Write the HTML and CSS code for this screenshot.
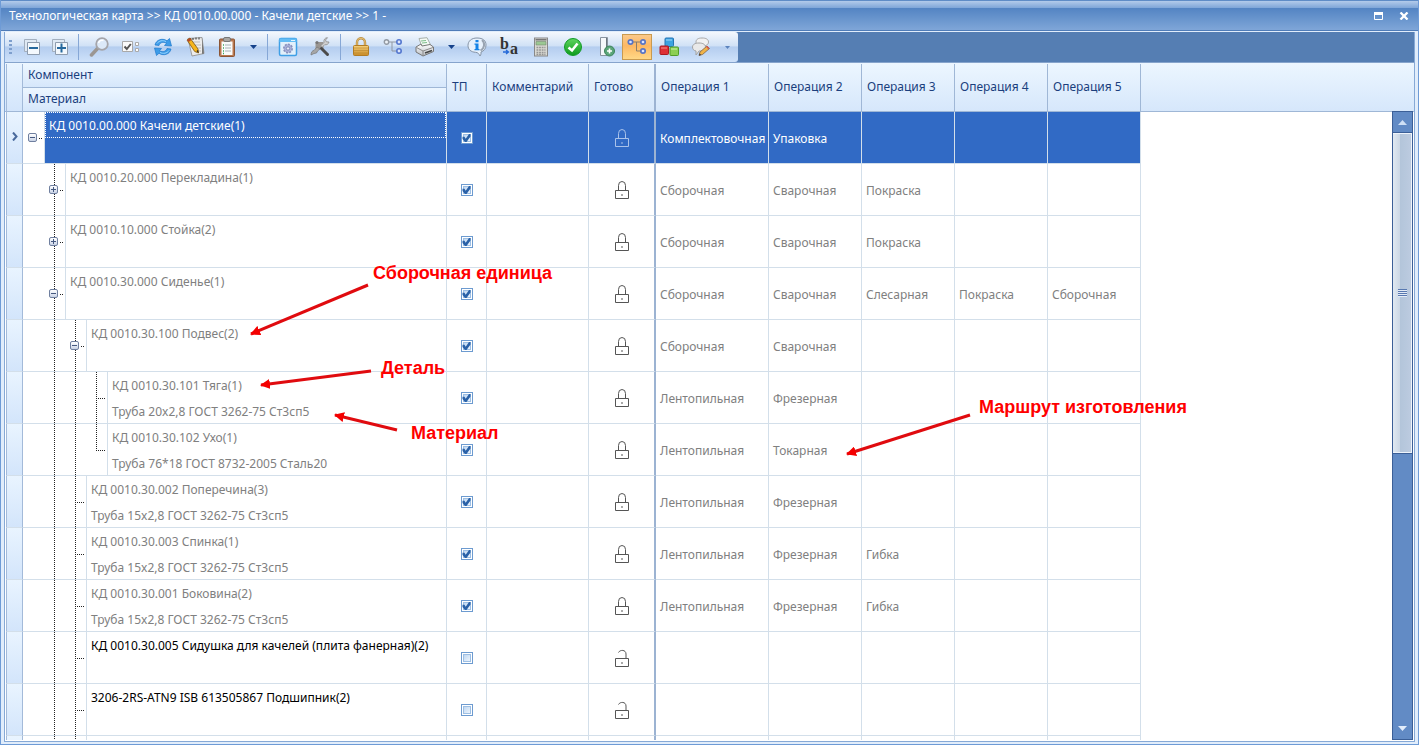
FILE: index.html
```html
<!DOCTYPE html>
<html lang="ru">
<head>
<meta charset="utf-8">
<title>Технологическая карта</title>
<link rel="stylesheet" href="styles.css">
</head>
<body>
<svg class="defs" aria-hidden="true">
  <defs>
    <linearGradient id="gold" x2="0" y2="1"><stop offset="0" stop-color="#f6d27c"/><stop offset="1" stop-color="#c98a26"/></linearGradient>
    <linearGradient id="green" x2="0" y2="1"><stop offset="0" stop-color="#5fd45f"/><stop offset="1" stop-color="#0c9a1c"/></linearGradient>
    <linearGradient id="steel" x2="0" y2="1"><stop offset="0" stop-color="#ffffff"/><stop offset="1" stop-color="#b9bec4"/></linearGradient>
    <symbol id="lock" viewBox="0 0 14 19"><path d="M3.500 9V4.500a3.500 4 0 0 1 7 0V9" fill="none" stroke="currentColor" stroke-width="1"/><path d="M.5 9.500h13v8H.5z" fill="none" stroke="currentColor"/><path d="M6 13h2v2H6z" fill="currentColor" opacity=".5"/></symbol>
    <symbol id="unlock" viewBox="0 0 14 19"><path d="M3.500 3.500C5 .5 11 .5 11 5v4" fill="none" stroke="currentColor"/><path d="M.5 9.500h13v8H.5z" fill="none" stroke="currentColor"/><path d="M6 13h2v2H6z" fill="currentColor" opacity=".5"/></symbol>
  </defs>
</svg>
<main class="window">
  <header class="titlebar">
    <h1>Технологическая карта &gt;&gt; КД 0010.00.000 - Качели детские &gt;&gt; 1 -</h1>
    <button class="winbtn" aria-label="Развернуть"><svg width="9" height="8"><path d="M.5 1h8v6.500h-8z" fill="none" stroke="#fff"/><path d="M0 0h9v3H0z" fill="#fff"/></svg></button>
    <button class="winbtn" aria-label="Закрыть"><svg width="10" height="8"><path d="M1.500 .5l7 7M8.500 .5l-7 7" stroke="#fff" stroke-width="2.300"/></svg></button>
  </header>
  <section class="client">
    <div class="dock">
      <div class="toolbar" role="toolbar">
        <span class="grip"></span>
        <button class="tool small" aria-label="Свернуть"><svg width="18" height="18"><path d="M1.500 1.500h12v12h-12z" fill="#dfe9f4" stroke="#a3afbe"/><path d="M4.500 4.500h12v12h-12z" fill="#f3f8fd" stroke="#8e9cae"/><path d="M6 10h9" stroke="#26689d" stroke-width="2"/></svg></button>
        <button class="tool small" aria-label="Развернуть"><svg width="18" height="18"><path d="M1.500 1.500h12v12h-12z" fill="#dfe9f4" stroke="#a3afbe"/><path d="M4.500 4.500h12v12h-12z" fill="#f3f8fd" stroke="#8e9cae"/><path d="M6 10h9M10.500 5.500v9" stroke="#26689d" stroke-width="2"/></svg></button>
        <span class="sep"></span>
        <button class="tool" aria-label="Поиск"><svg width="20" height="20"><path d="M9 11l-6.500 7" stroke="#9b9692" stroke-width="3.500" stroke-linecap="round"/><circle cx="13" cy="7" r="5.800" fill="#dce9f8" stroke="#a5a5aa" stroke-width="1.800"/><path d="M9.500 6a4 4 0 0 1 5-2.500" fill="none" stroke="#fff" stroke-width="1.500"/></svg></button>
        <button class="tool" aria-label="Отметить"><svg width="20" height="20"><path d="M1.500 4.500h10v10h-10z" fill="#fafafa" stroke="#a9a9a9"/><path d="M3.500 9.500l2.300 2.500 4-5" fill="none" stroke="#555" stroke-width="2"/><path d="M14.500 5.500h3v3h-3zM14.500 11.500h3v3h-3z" fill="#fff" stroke="#aaa"/></svg></button>
        <button class="tool" aria-label="Обновить"><svg width="20" height="20"><g fill="#3c9be8" stroke="#1c78cd" stroke-width=".7"><path d="M2 8C3 3 9 .5 14 3.800L16.500 1.500 18.500 9l-7-.5 2-2.300C10 4.500 7 5.500 6 8.500z"/><path d="M18 12c-1 5-7 7.500-12 4.200L3.500 18.500 1.500 11l7 .5-2 2.300c3.500 1.700 6.500.7 7.500-2.300z"/></g><path d="M4 6.500C6 3.500 10 3 13 4.500M16 13.500c-2 3-6 3.500-9 2" fill="none" stroke="#9ad6ff"/></svg></button>
        <button class="tool" aria-label="Изменить"><svg width="20" height="20"><path d="M3 1.500l14-1 2 16-12 2.500z" fill="#ececec" stroke="#9c9c9c"/><path d="M17 .5l2 16-2 .5z" fill="#777"/><path d="M8 5h7M8 8h8M9 11h7M10 14h6" stroke="#bbb"/><path d="M5 1v2M8 1v2M11 .5v2M14 .5v2" stroke="#333"/><path d="M2 3l3-2 8 11 .5 4-3.800-1.500z" fill="#f6b51b" stroke="#7a5515" stroke-width=".8"/><path d="M2 3l3-2 1.500 2-3 2z" fill="#b44a2a"/><path d="M11.500 14l2 2-.5-3z" fill="#222"/></svg></button>
        <button class="tool" aria-label="Буфер"><svg width="18" height="20"><rect x="1.500" y="2" width="15" height="17.500" rx="1" fill="#b97850" stroke="#8b5535"/><path d="M3.500 4.500h11V18h-11z" fill="#f8fbfb"/><rect x="5.500" y=".5" width="7" height="4" rx="1.500" fill="#a9a6a2" stroke="#777"/><path d="M7 8h6M7 11h6M7 14h6" stroke="#a8b2b8"/><path d="M5 8h1M5 11h1M5 14h1M5 16.500h1" stroke="#3ca75b" stroke-width="1.500"/></svg></button>
        <button class="tool drop" aria-label="Ещё"><svg width="7" height="4"><path d="M0 0h7L3.500 4z" fill="#15428b"/></svg></button>
        <span class="sep"></span>
        <button class="tool" aria-label="Настройка окна"><svg width="20" height="20"><rect x="1.500" y="1.500" width="17" height="17" rx="1.500" fill="#e2f0fb" stroke="#3f9fe6" stroke-width="1.500"/><path d="M1.500 1.500h17V5h-17z" fill="#63bdf5"/><path d="M13 3.500h4" stroke="#e4f5ff"/><circle cx="10" cy="11.500" r="4.200" fill="#a9b1da" stroke="#8790bd" stroke-width="1.600" stroke-dasharray="2 1.200"/><circle cx="10" cy="11.500" r="1.700" fill="#e6eaf7" stroke="#7e89b9"/></svg></button>
        <button class="tool" aria-label="Инструменты"><svg width="20" height="20"><path d="M5.500 5h8v7h-8z" fill="#9a9692"/><path d="M11 8.500l3-3c-.7-2.500 1-5 3.500-4.800L15.500 3l.8 1.800 2.700.2c-.5 2.300-2.500 3.200-4.300 2.700l-3 3z" fill="#d0d0d0" stroke="#8d8d8d" stroke-width=".8"/><path d="M7 10l-3 3.500c-1.500 0-3 1.500-3 4.500l3-1.500 2.500-.5 1-2 2.500-2z" fill="#a7a7a7" stroke="#777" stroke-width=".7"/><circle cx="7" cy="5.500" r="1.500" fill="#777"/><path d="M11.500 11.500l6 6" stroke="#4b4b4b" stroke-width="3" stroke-linecap="round"/></svg></button>
        <span class="sep"></span>
        <button class="tool" aria-label="Блокировать"><svg width="18" height="20"><path d="M5 9V5.500a4 4.200 0 0 1 8 0V9" fill="none" stroke="#b98a39" stroke-width="2.400"/><path d="M5 9V5.500a4 4.200 0 0 1 8 0V9" fill="none" stroke="#f0d28b" stroke-width=".8"/><rect x="1.500" y="8.500" width="15" height="10" rx="1" fill="url(#gold)" stroke="#b27c24"/><path d="M2 11h14M2 13.500h14M2 16h14" stroke="#b9872f" opacity=".6"/></svg></button>
        <button class="tool" aria-label="Структура"><svg width="20" height="20"><path d="M5 5h9M9 5v9h5" fill="none" stroke="#8f97a3"/><circle cx="3.500" cy="5" r="2.200" fill="#eef3f8" stroke="#939aa3" stroke-width="1.400"/><circle cx="16" cy="5" r="2.200" fill="#dce5fa" stroke="#5477cf" stroke-width="1.600"/><circle cx="16" cy="14" r="2.200" fill="#dce5fa" stroke="#5477cf" stroke-width="1.600"/></svg></button>
        <button class="tool" aria-label="Печать"><svg width="20" height="20"><path d="M4 1.500l8-.8 4 8-9 1.300z" fill="#f4faf4" stroke="#a8b0ab"/><path d="M6 4l5-.5M7 6l5-.5" stroke="#7fbf8c"/><path d="M1 10l5-3 1 2 8-1.500 3.500 2.500v4.500L8 19l-7-4z" fill="url(#steel)" stroke="#777"/><path d="M1.500 10.500L8 14l10-3.500M8 14v4.500" fill="none" stroke="#8a8a8a"/><path d="M10 16l7-2.500" stroke="#444" stroke-width="1.500"/></svg></button>
        <button class="tool drop" aria-label="Параметры печати"><svg width="7" height="4"><path d="M0 0h7L3.500 4z" fill="#15428b"/></svg></button>
        <button class="tool" aria-label="Сведения"><svg width="20" height="20"><path d="M10 1c6 0 9 2.800 9 7 0 3.500-2 6-5 7 .2 1.500 0 2.800-1 4-1-2-1.800-3.500-4.500-3.700C4 15 1 12.500 1 8.500 1 4 4.500 1 10 1z" fill="#e7f1fc" stroke="#8593a5"/><path d="M15 3c3 2.500 3 8-1.500 10.500" fill="none" stroke="#99a4b2" stroke-width="2"/><path d="M8.500 3h3v2.200h-3zM7.500 6.500h4V12h1v1.200H7.500V12h1V7.700h-1z" fill="#1583e6"/></svg></button>
        <button class="tool" aria-label="Переименовать"><svg width="26" height="24"><text class="ba" x="4" y="14">b</text><text class="ba" x="14" y="19">a</text><path d="M7 17h5M10 15l2.500 2-2.500 2" fill="none" stroke="#2368d8" stroke-width="1.300"/></svg></button>
        <button class="tool" aria-label="Калькулятор"><svg width="18" height="20"><rect x="2.500" y="1" width="13" height="18" fill="#d9d9d2" stroke="#888"/><path d="M3.500 2h11v1.500h-11z" fill="#777"/><path d="M4 4.500h10V8H4z" fill="#9bc893" stroke="#768a71" stroke-width=".6"/><path d="M4.500 10.500h9M4.500 13h9M4.500 15.500h9M4.500 17.500h9" stroke="#959595" stroke-width="1.400" stroke-dasharray="1.800 .8"/></svg></button>
        <button class="tool" aria-label="Готово"><svg width="20" height="20"><circle cx="10" cy="10" r="8.500" fill="url(#green)" stroke="#119b27"/><path d="M5.500 10.500L9 13.500l5.500-7" fill="none" stroke="#fff" stroke-width="2.600"/></svg></button>
        <button class="tool" aria-label="Добавить документ"><svg width="20" height="20"><path d="M5.500 .5h7v18h-7z" fill="#f5f8fb" stroke="#8994a0"/><path d="M11.500 1v12" stroke="#6c7680"/><circle cx="14.500" cy="14" r="5" fill="#5aa578" stroke="#3b8359"/><path d="M12 14h5M14.500 11.500v5" stroke="#fff" stroke-width="1.600"/></svg></button>
        <button class="tool active" aria-pressed="true" aria-label="Дерево"><svg width="20" height="20"><path d="M5 5h9M9.500 5v9H14" fill="none" stroke="#8b7d6c"/><g fill="#dbe5ff" stroke="#5874c4" stroke-width="1.700"><circle cx="3.500" cy="5" r="2.200"/><circle cx="16" cy="5" r="2.200"/><circle cx="16" cy="14" r="2.200"/></g></svg></button>
        <button class="tool" aria-label="Блоки"><svg width="20" height="20"><rect x="6" y="1" width="8.500" height="8.500" rx="1" fill="#3ca3e0" stroke="#2475b5"/><path d="M7 3h6" stroke="#a1d9fa"/><rect x="1" y="9" width="8.500" height="8.500" rx="1" fill="#de3036" stroke="#aa1a20"/><path d="M2 11h6" stroke="#f78d8d"/><rect x="11" y="10" width="8.500" height="8.500" rx="1" fill="#8ccf54" stroke="#519d29"/><path d="M12 12h6" stroke="#cdf2a3"/></svg></button>
        <button class="tool" aria-label="Комментарии"><svg width="20" height="20"><path d="M11 1c4 0 6.500 1.300 6.500 4S15 9 11 9 5 7.500 5 5s2-4 6-4z" fill="#f1f1f1" stroke="#a8a8a8"/><path d="M8 6c4 0 6.500 1.500 6.500 4S12 14 8 14l-3 4v-4c-2.500-.5-3.500-2-3.500-4C1.500 7.500 4 6 8 6z" fill="#e9e9e9" stroke="#a3a3a3"/><path d="M8 18.500l1-3.500 7-6 2.500 2.500-7 6z" fill="#f0b347" stroke="#80654a" stroke-width=".8"/><path d="M8 18.500l.6-2 1.500 1.500z" fill="#333"/><path d="M15 9.800l2.300 2.500 1.200-1-2.500-2.500z" fill="#d5574f"/></svg></button>
        <button class="tool overflow" aria-label="Другие кнопки"><svg width="5" height="3"><path d="M0 0h5L2.500 3z" fill="#5b83bd"/></svg></button>
      </div>
    </div>
    <div class="grid">
      <div class="viewport">
        <table>
          <colgroup><col class="c-ind"><col class="c-tree"><col class="c-tp"><col class="c-comment"><col class="c-ready"><col class="c-op1"><col class="c-op"><col class="c-op"><col class="c-op"><col class="c-op"></colgroup>
          <thead>
            <tr><th rowspan="2" class="ind"></th><th class="half">Компонент</th><th rowspan="2">ТП</th><th rowspan="2">Комментарий</th><th rowspan="2" class="fix">Готово</th><th rowspan="2">Операция 1</th><th rowspan="2">Операция 2</th><th rowspan="2">Операция 3</th><th rowspan="2">Операция 4</th><th rowspan="2">Операция 5</th></tr>
            <tr><th class="half">Материал</th></tr>
          </thead>
          <tbody>
            <tr class="selected"><td class="ind"><svg width="6" height="9"><path d="M1 .5l3.500 4L1 8.500" fill="none" stroke="#49699c" stroke-width="2"/></svg></td><td class="treecell"><div class="tree"><span class="slot"><button class="exp" aria-label="Свернуть"></button><i></i></span><div class="name"><p>КД 0010.00.000 Качели детские(1)</p></div></div></td><td class="mid"><input type="checkbox" checked aria-label="ТП"></td><td></td><td class="mid fix"><svg class="lk"><use href="#lock"/></svg></td><td>Комплектовочная</td><td>Упаковка</td><td></td><td></td><td></td></tr>
            <tr><td class="ind"></td><td class="treecell"><div class="tree"><span class="slot"></span><span class="slot line"><button class="exp plus" aria-label="Развернуть"></button><i></i></span><div class="name"><p>КД 0010.20.000 Перекладина(1)</p></div></div></td><td class="mid"><input type="checkbox" checked aria-label="ТП"></td><td></td><td class="mid fix"><svg class="lk"><use href="#lock"/></svg></td><td>Сборочная</td><td>Сварочная</td><td>Покраска</td><td></td><td></td></tr>
            <tr><td class="ind"></td><td class="treecell"><div class="tree"><span class="slot"></span><span class="slot line"><button class="exp plus" aria-label="Развернуть"></button><i></i></span><div class="name"><p>КД 0010.10.000 Стойка(2)</p></div></div></td><td class="mid"><input type="checkbox" checked aria-label="ТП"></td><td></td><td class="mid fix"><svg class="lk"><use href="#lock"/></svg></td><td>Сборочная</td><td>Сварочная</td><td>Покраска</td><td></td><td></td></tr>
            <tr><td class="ind"></td><td class="treecell"><div class="tree"><span class="slot"></span><span class="slot line"><button class="exp" aria-label="Свернуть"></button><i></i></span><div class="name"><p>КД 0010.30.000 Сиденье(1)</p></div></div></td><td class="mid"><input type="checkbox" checked aria-label="ТП"></td><td></td><td class="mid fix"><svg class="lk"><use href="#lock"/></svg></td><td>Сборочная</td><td>Сварочная</td><td>Слесарная</td><td>Покраска</td><td>Сборочная</td></tr>
            <tr><td class="ind"></td><td class="treecell"><div class="tree"><span class="slot"></span><span class="slot line"></span><span class="slot line"><button class="exp" aria-label="Свернуть"></button><i></i></span><div class="name"><p>КД 0010.30.100 Подвес(2)</p></div></div></td><td class="mid"><input type="checkbox" checked aria-label="ТП"></td><td></td><td class="mid fix"><svg class="lk"><use href="#lock"/></svg></td><td>Сборочная</td><td>Сварочная</td><td></td><td></td><td></td></tr>
            <tr><td class="ind"></td><td class="treecell"><div class="tree"><span class="slot"></span><span class="slot line"></span><span class="slot line"></span><span class="slot line leaf"><i></i></span><div class="name"><p>КД 0010.30.101 Тяга(1)</p><p>Труба 20x2,8 ГОСТ 3262-75 Ст3сп5</p></div></div></td><td class="mid"><input type="checkbox" checked aria-label="ТП"></td><td></td><td class="mid fix"><svg class="lk"><use href="#lock"/></svg></td><td>Лентопильная</td><td>Фрезерная</td><td></td><td></td><td></td></tr>
            <tr><td class="ind"></td><td class="treecell"><div class="tree"><span class="slot"></span><span class="slot line"></span><span class="slot line"></span><span class="slot line leaf last"><i></i></span><div class="name"><p>КД 0010.30.102 Ухо(1)</p><p>Труба 76*18 ГОСТ 8732-2005 Сталь20</p></div></div></td><td class="mid"><input type="checkbox" checked aria-label="ТП"></td><td></td><td class="mid fix"><svg class="lk"><use href="#lock"/></svg></td><td>Лентопильная</td><td>Токарная</td><td></td><td></td><td></td></tr>
            <tr><td class="ind"></td><td class="treecell"><div class="tree"><span class="slot"></span><span class="slot line"></span><span class="slot line leaf"><i></i></span><div class="name"><p>КД 0010.30.002 Поперечина(3)</p><p>Труба 15x2,8 ГОСТ 3262-75 Ст3сп5</p></div></div></td><td class="mid"><input type="checkbox" checked aria-label="ТП"></td><td></td><td class="mid fix"><svg class="lk"><use href="#lock"/></svg></td><td>Лентопильная</td><td>Фрезерная</td><td></td><td></td><td></td></tr>
            <tr><td class="ind"></td><td class="treecell"><div class="tree"><span class="slot"></span><span class="slot line"></span><span class="slot line leaf"><i></i></span><div class="name"><p>КД 0010.30.003 Спинка(1)</p><p>Труба 15x2,8 ГОСТ 3262-75 Ст3сп5</p></div></div></td><td class="mid"><input type="checkbox" checked aria-label="ТП"></td><td></td><td class="mid fix"><svg class="lk"><use href="#lock"/></svg></td><td>Лентопильная</td><td>Фрезерная</td><td>Гибка</td><td></td><td></td></tr>
            <tr><td class="ind"></td><td class="treecell"><div class="tree"><span class="slot"></span><span class="slot line"></span><span class="slot line leaf"><i></i></span><div class="name"><p>КД 0010.30.001 Боковина(2)</p><p>Труба 15x2,8 ГОСТ 3262-75 Ст3сп5</p></div></div></td><td class="mid"><input type="checkbox" checked aria-label="ТП"></td><td></td><td class="mid fix"><svg class="lk"><use href="#lock"/></svg></td><td>Лентопильная</td><td>Фрезерная</td><td>Гибка</td><td></td><td></td></tr>
            <tr class="new"><td class="ind"></td><td class="treecell"><div class="tree"><span class="slot"></span><span class="slot line"></span><span class="slot line leaf"><i></i></span><div class="name"><p>КД 0010.30.005 Сидушка для качелей (плита фанерная)(2)</p></div></div></td><td class="mid"><input type="checkbox" aria-label="ТП"></td><td></td><td class="mid fix"><svg class="lk"><use href="#unlock"/></svg></td><td></td><td></td><td></td><td></td><td></td></tr>
            <tr class="new"><td class="ind"></td><td class="treecell"><div class="tree"><span class="slot"></span><span class="slot line"></span><span class="slot line leaf"><i></i></span><div class="name"><p>3206-2RS-ATN9 ISB 613505867 Подшипник(2)</p></div></div></td><td class="mid"><input type="checkbox" aria-label="ТП"></td><td></td><td class="mid fix"><svg class="lk"><use href="#unlock"/></svg></td><td></td><td></td><td></td><td></td><td></td></tr>
            <tr><td class="ind"></td><td class="treecell"><div class="tree"><span class="slot"></span><span class="slot line"></span><span class="slot line"></span><div class="name"></div></div></td><td></td><td></td><td class="fix"></td><td></td><td></td><td></td><td></td><td></td></tr>
          </tbody>
        </table>
      </div>
      <div class="side">
        <div class="scrollbar">
          <button aria-label="Вверх"><svg width="9" height="5"><path d="M4.500 0L9 5H0z" fill="#cfe0f5"/></svg></button>
          <div class="thumb"><span></span></div>
          <button class="down" aria-label="Вниз"><svg width="9" height="5"><path d="M0 0h9L4.500 5z" fill="#e2edfb"/></svg></button>
        </div>
      </div>
    </div>
  </section>
  <svg class="arrows" aria-hidden="true">
    <defs><marker id="tip" viewBox="0 0 10 10" refX="9" refY="5" markerWidth="10" markerHeight="10" markerUnits="userSpaceOnUse" orient="auto"><path d="M0 0l10 5-10 5z" fill="#f40000"/></marker></defs>
    <g stroke="#e00b0f" stroke-width="3">
      <path d="M367 285L250 334" marker-end="url(#tip)"/>
      <path d="M370 371L260 385" marker-end="url(#tip)"/>
      <path d="M396 430L334 415" marker-end="url(#tip)"/>
      <path d="M969 415L846 454" marker-end="url(#tip)"/>
    </g>
  </svg>
  <strong class="note unit">Сборочная единица</strong>
  <strong class="note part">Деталь</strong>
  <strong class="note material">Материал</strong>
  <strong class="note route">Маршрут изготовления</strong>
</main>
</body>
</html>
```
FILE: styles.css
```css
* { box-sizing: border-box; }

body {
  margin: 0;
  font: 12px/16px "Noto Sans", "DejaVu Sans Condensed", sans-serif;
  color: #808080;
  overflow: hidden;
}

button {
  margin: 0;
  padding: 0;
  border: 0;
  background: none;
}

svg { display: block; }
.defs { position: absolute; width: 0; height: 0; }

.window {
  position: relative;
  display: flex;
  flex-direction: column;
  height: 100vh;
  border: 1px solid #6e9bd6;
  border-top: 0;
  background: #e1edfb;
}

/* Title bar */
.titlebar {
  flex: none;
  display: flex;
  align-items: center;
  height: 31px;
  padding: 0 8px;
  border-top: 1px solid #5f8cc6;
  border-bottom: 1px solid #4f7cb8;
  background: linear-gradient(#b3cbea 0, #7ea5d8 7px, #5384c3 7px, #7fa6d8 100%);
  color: #fff;
}
.titlebar h1 { flex: 1; margin: 0; font-size: 12px; font-weight: normal; }
.winbtn { width: 25px; height: 16px; display: grid; place-items: center; }
.winbtn:last-child { margin-right: -6px; }

/* Toolbar */
.client {
  flex: 1;
  min-height: 0;
  display: flex;
  flex-direction: column;
  margin: 1px 3px 2px;
  border: 1px solid #86a9d6;
  border-top: 0;
}
.dock { flex: none; height: 31px; background: #557eb3; border-bottom: 1px solid #86a4cc; }
.toolbar {
  width: max-content;
  height: 30px;
  display: flex;
  align-items: center;
  border-radius: 0 3px 3px 0;
  background: linear-gradient(#f4f8fd 0, #d0e1f6 46%, #b4cdef 50%, #cfe2fa 100%);
}
.grip {
  width: 3px;
  height: 15px;
  margin: 0 6px 0 4px;
  background: repeating-linear-gradient(#7e9fcd 0 2px, transparent 2px 4px);
}
.tool { width: 32px; height: 28px; display: grid; place-items: center; }
.tool.small { width: 28px; }
.tool.drop { width: 20px; }
.tool.overflow { width: 21px; }
.tool.active {
  width: 30px;
  height: 26px;
  margin: 0 1px;
  border: 1px solid #c99a4f;
  background: linear-gradient(#fbc98a, #fdb863 45%, #ffd886);
}
.sep { width: 1px; height: 26px; margin: 0 4px; background: #86a7d6; }
.ba { font: bold 16px "Liberation Serif", serif; fill: #333; }

/* Grid */
.grid {
  flex: 1;
  min-height: 0;
  display: flex;
  padding: 1px;
  background: linear-gradient(#ecf6ff 0, #d6e7fb 48px, #9fb7d6 48px, #9fb7d6 49px, #fff 49px);
}
.viewport { flex: 1; min-width: 0; overflow: hidden; }
table { table-layout: fixed; width: 1135px; border-collapse: separate; border-spacing: 0; }
.c-ind { width: 17px; }
.c-tree { width: 424px; }
.c-tp { width: 40px; }
.c-comment { width: 102px; }
.c-ready { width: 67px; }
.c-op1 { width: 113px; }
.c-op { width: 93px; }

th {
  height: 48px;
  padding: 0 5px 2px;
  border-right: 1px solid #9fb7d6;
  border-bottom: 1px solid #9fb7d6;
  background: linear-gradient(#ecf6ff, #d6e7fb);
  color: #1b3f7d;
  font-weight: normal;
  text-align: left;
}
th.half { height: 24px; }
td {
  height: 52px;
  padding: 3px 2px 0 4px;
  border-right: 1px solid #d3dfea;
  border-bottom: 1px solid #d3dfea;
  background: #fff;
  white-space: nowrap;
}
.fix { border-right: 2px solid #9cb3d2; }
.ind {
  padding: 0 0 2px 5px;
  border-left: 1px solid #a3bad9;
  border-right-color: #a3bad9;
  background: linear-gradient(#e9f4ff, #d3e5fb);
}
.mid { padding: 1px 0 0; }
.mid > * { margin: 0 auto; }
.lk { width: 14px; height: 19px; color: #555; }
.new { color: #000; }

.selected td:not(.ind) { background: #316ac5; color: #fff; }
.selected td.treecell { background: #fff; }
.selected .name { background: #316ac5; }
.selected .lk { color: #a9c2ea; }
.selected p { outline: 1px dotted #fff; outline-offset: -1px; }

/* Tree cell */
td.treecell { padding: 0 0 0 1px; }
.tree { display: flex; height: 51px; }
.slot { flex: none; width: 21px; display: flex; align-items: center; padding-left: 4px; }
.slot:has(+ .name) { width: 20px; }
.slot i {
  flex: 1;
  height: 1px;
  margin: 2px 2px 0;
  background: repeating-linear-gradient(90deg, #222 0 1px, transparent 1px 2px);
}
.leaf i { margin: 2px 2px 0 5px; }
.line { background: repeating-linear-gradient(#222 0 1px, transparent 1px 2px) 9px 0 / 1px 100% no-repeat; }
.last {
  background:
    linear-gradient(#fff, #fff) 9px 27px / 1px 24px no-repeat,
    repeating-linear-gradient(#222 0 1px, transparent 1px 2px) 9px 0 / 1px 100% no-repeat;
}
.exp {
  flex: none;
  width: 9px;
  height: 9px;
  border: 1px solid #6f7f9f;
  border-radius: 2px;
  background:
    linear-gradient(#45587f, #45587f) center / 5px 1px no-repeat,
    linear-gradient(#fff, #c9d3e6);
}
.exp.plus {
  background:
    linear-gradient(#45587f, #45587f) center / 5px 1px no-repeat,
    linear-gradient(#45587f, #45587f) center / 1px 5px no-repeat,
    linear-gradient(#fff, #c9d3e6);
}
.name { flex: 1; border-left: 1px solid #d3dfea; }
.name p { margin: 0; padding: 1px 0 0 4px; line-height: 26px; height: 26px; }

input[type="checkbox"] {
  appearance: none;
  display: block;
  width: 12px;
  height: 12px;
  border: 1px solid #6d9bd0;
  background: linear-gradient(135deg, #b9d3ef, #f4f9ff) center / 8px 8px no-repeat, #fff;
  outline: 1px solid #9dbfe4;
  outline-offset: -3px;
}
input:checked::after {
  content: "";
  display: block;
  width: 10px;
  height: 10px;
  background: #2b62a8;
  clip-path: polygon(10% 38%, 30% 38%, 42% 58%, 75% 10%, 90% 10%, 90% 35%, 50% 90%, 35% 90%, 10% 60%);
}

/* Scroll bar */
.side { flex: none; width: 21px; padding-top: 47px; }
.scrollbar {
  height: 100%;
  width: 21px;
  display: flex;
  flex-direction: column;
  border: 1px solid #3b5f97;
  background: #628bc5;
}
.scrollbar button { height: 21px; display: grid; place-items: center; }
.scrollbar .down { margin-top: auto; }
.thumb {
  flex: 0 0 51%;
  display: grid;
  place-items: center;
  border: 1px solid #eef4fb;
  border-width: 1px 1px 1px 0;
  outline: 1px solid #3b5f97;
  background: linear-gradient(90deg, #e0e9f2 0, #cbd7e5 7px, #b3c5da 7px, #bccbe0 100%);
}
.thumb span { width: 9px; height: 8px; background: repeating-linear-gradient(#5878b0 0 1px, #e3ebf6 1px 2px); }

/* Callouts */
.arrows { position: absolute; inset: 0; width: 100%; height: 100%; pointer-events: none; }
.note {
  position: absolute;
  color: #f00;
  font: bold 18px/20px "Liberation Sans", Arial, sans-serif;
  white-space: nowrap;
}
.unit { left: 372px; top: 263px; }
.part { left: 380px; top: 358px; }
.material { left: 410px; top: 423px; }
.route { left: 978px; top: 397px; }
```
